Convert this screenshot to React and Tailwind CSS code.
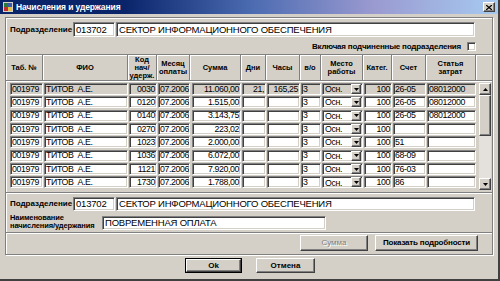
import React from "react";

const FONT = "font-['Liberation_Sans',Arial,sans-serif]";
const SUNKEN =
  "border border-t-[#808080] border-l-[#808080] border-b-white border-r-white shadow-[inset_1px_1px_0_#404040,inset_-1px_-1px_0_#d4d0c8]";
const RAISED =
  "border border-t-white border-l-white border-b-[#404040] border-r-[#404040] shadow-[inset_-1px_-1px_0_#808080,inset_1px_1px_0_#d4d0c8]";

const cols = [
  { w: "w-[33px]", ml: "ml-0", align: "justify-start" },
  { w: "w-[84px]", ml: "ml-[1px]", align: "justify-start" },
  { w: "w-[28px]", ml: "ml-[1px]", align: "justify-end" },
  { w: "w-[32px]", ml: "ml-[1px]", align: "justify-start" },
  { w: "w-[49px]", ml: "ml-[2px]", align: "justify-end" },
  { w: "w-[24px]", ml: "ml-[1px]", align: "justify-end" },
  { w: "w-[33px]", ml: "ml-[1px]", align: "justify-end" },
  { w: "w-[20px]", ml: "ml-[1px]", align: "justify-start" },
  { w: "w-[41px]", ml: "ml-[1px]", align: "justify-start", combo: true },
  { w: "w-[28px]", ml: "ml-[1px]", align: "justify-end" },
  { w: "w-[33px]", ml: "ml-[1px]", align: "justify-start" },
  { w: "w-[49px]", ml: "ml-[1px]", align: "justify-start" },
];

const headers = [
  { w: "w-[37px]", lines: ["Таб. №"] },
  { w: "w-[85px]", lines: ["ФИО"] },
  { w: "w-[29px]", lines: ["Код", "нач/", "удерж."] },
  { w: "w-[33px]", lines: ["Месяц", "оплаты"] },
  { w: "w-[51px]", lines: ["Сумма"] },
  { w: "w-[25px]", lines: ["Дни"] },
  { w: "w-[34px]", lines: ["Часы"] },
  { w: "w-[21px]", lines: ["в/о"] },
  { w: "w-[42px]", lines: ["Место", "работы"] },
  { w: "w-[29px]", lines: ["Катег."] },
  { w: "w-[34px]", lines: ["Счет"] },
  { w: "w-[50px]", lines: ["Статья", "затрат"] },
];

const data = [
  ["0030", "11.060,00", "21,", "165,25", "26-05", "08012000"],
  ["0120", "1.515,00", "", "", "26-05", "08012000"],
  ["0140", "3.143,75", "", "", "26-05", "08012000"],
  ["0270", "223,02", "", "", "", ""],
  ["1023", "2.000,00", "", "", "51", ""],
  ["1036", "6.072,00", "", "", "68-09", ""],
  ["1121", "7.920,00", "", "", "76-03", ""],
  ["1730", "1.788,00", "", "", "86", ""],
];

function Arrow({ up }) {
  return (
    <svg width="5" height="3" viewBox="0 0 5 3">
      {up ? <path d="M2.5 0 L5 3 L0 3 Z" fill="#000" /> : <path d="M0 0 L5 0 L2.5 3 Z" fill="#000" />}
    </svg>
  );
}

function Row({ r, first }) {
  const values = ["001979", "ТИТОВ  А.Е.", r[0], "07.2006", r[1], r[2], r[3], "3", "Осн.", "100", r[4], r[5]];
  const bg = first ? "bg-[#d4d0c8]" : "bg-white";
  return (
    <div className="flex h-[12px]">
      {cols.map((c, i) => (
        <div
          key={i}
          className={`${c.w} ${c.ml} ${SUNKEN} ${bg} h-[12px] flex items-center ${c.align} overflow-hidden text-[8.8px] leading-none pl-[1px] pr-[1px] whitespace-pre tracking-[-0.4px]`}
        >
          {c.combo ? (
            <div className="flex w-full h-full items-center">
              <span className="flex-1 pl-[1px] pt-[1px]">Осн.</span>
              <span className={`w-[10px] h-full ${RAISED} bg-[#d4d0c8] flex items-center justify-center`}>
                <Arrow />
              </span>
            </div>
          ) : (
            values[i]
          )}
        </div>
      ))}
    </div>
  );
}

function Field({ w, h = "h-[15px]", children }) {
  return (
    <div className={`${w} ${h} ${SUNKEN} bg-white flex items-center pl-[2px] text-[9.5px] leading-none whitespace-nowrap overflow-hidden tracking-[-0.2px]`}>
      {children}
    </div>
  );
}

export default function App() {
  return (
    <div className={`w-[500px] h-[281px] bg-[#d4d0c8] ${FONT} text-black flex flex-col overflow-hidden border-r-2 border-b-2 border-r-[#404040] border-b-[#404040]`}>
      {/* title bar */}
      <div className="h-[14px] flex items-center bg-[linear-gradient(90deg,#0a246a_0%,#0a246a_25%,#4a6ab0_50%,#9a9ad0_75%,#a6caf0_100%)] pl-[3px] pr-[3px]">
        <svg width="10" height="10" viewBox="0 0 10 10" className="shrink-0">
          <rect x="0" y="0" width="10" height="10" fill="#d4d0c8" />
          <rect x="1" y="1" width="4" height="4" fill="#2a7a3a" />
          <rect x="5" y="1" width="4" height="4" fill="#3a5ab0" />
          <rect x="1" y="5" width="4" height="4" fill="#c03030" />
          <rect x="5" y="5" width="4" height="4" fill="#e0c040" />
        </svg>
        <span className="ml-[3px] text-white text-[8.5px] font-bold leading-none tracking-[-0.1px]">Начисления и удержания</span>
        <div className="flex-1" />
        <div className={`w-[12px] h-[10px] ${RAISED} bg-[#d4d0c8] flex items-center justify-center`}>
          <svg width="6" height="5" viewBox="0 0 6 5">
            <path d="M0 0 L6 5 M6 0 L0 5" stroke="#000" strokeWidth="1.3" />
          </svg>
        </div>
      </div>

      {/* main panel */}
      <div className="mx-[5px] mt-[3px] h-[238px] border border-[#808080] shadow-[inset_1px_1px_0_white,1px_1px_0_white] flex flex-col">
        <div className="flex items-center pt-[4px] pl-[4px]">
          <span className="w-[63px] text-[8px] font-bold whitespace-nowrap">Подразделение</span>
          <Field w="w-[42px]">013702</Field>
          <div className="w-[1px]" />
          <Field w="w-[359px]">СЕКТОР ИНФОРМАЦИОННОГО ОБЕСПЕЧЕНИЯ</Field>
        </div>
        <div className="flex items-center justify-end mt-[5px] pr-[16px] h-[9px]">
          <span className="text-[8px] font-bold leading-none tracking-[-0.2px]">Включая подчиненные подразделения</span>
          <div className={`ml-[6px] w-[9px] h-[9px] ${SUNKEN} bg-white`} />
        </div>

        {/* header */}
        <div className="mt-[3px] h-[27px] flex border-t border-t-[#808080] border-b border-b-[#808080] shadow-[inset_0_1px_0_white,0_1px_0_white]">
          {headers.map((h, i) => (
            <div
              key={i}
              className={`${h.w} h-full flex flex-col items-center justify-center border-r border-r-[#808080] shadow-[1px_0_0_white] text-[7.5px] font-bold leading-[8px] text-center whitespace-nowrap`}
            >
              {h.lines.map((l, j) => (
                <span key={j}>{l}</span>
              ))}
            </div>
          ))}
        </div>

        {/* rows + scrollbar */}
        <div className="flex mt-[2px] pl-[4px] h-[107px]">
          <div className="flex flex-col gap-[1.35px]">
            {data.map((r, i) => (
              <Row key={i} r={r} first={i === 0} />
            ))}
          </div>
          <div className="ml-[3px] w-[12px] h-full flex flex-col">
            <div className={`h-[12px] ${RAISED} bg-[#d4d0c8] flex items-center justify-center`}>
              <Arrow up />
            </div>
            <div className={`h-[41px] ${RAISED} bg-[#d4d0c8]`} />
            <div className="flex-1 bg-[#e4e1dc]" />
            <div className={`h-[12px] ${RAISED} bg-[#d4d0c8] flex items-center justify-center`}>
              <Arrow />
            </div>
          </div>
        </div>

        <div className="mt-[2px] border-t border-t-[#808080] border-b border-b-white" />

        {/* bottom form */}
        <div className="flex items-center mt-[3px] pl-[4px]">
          <span className="w-[63px] text-[8px] font-bold whitespace-nowrap">Подразделение</span>
          <Field w="w-[42px]" h="h-[14px]">013702</Field>
          <div className="w-[1px]" />
          <Field w="w-[359px]" h="h-[14px]">СЕКТОР ИНФОРМАЦИОННОГО ОБЕСПЕЧЕНИЯ</Field>
        </div>
        <div className="flex items-center mt-[1px] pl-[4px] h-[19px]">
          <span className="w-[92px] text-[7.5px] font-bold leading-[8px] whitespace-nowrap tracking-[-0.1px]">
            Наименование
            <br />
            начисления/удержания
          </span>
          <div className="mt-[2px]">
            <Field w="w-[224px]" h="h-[14px]">ПОВРЕМЕННАЯ ОПЛАТА</Field>
          </div>
        </div>

        <div className="mt-[1px] border-t border-t-[#808080] border-b border-b-white" />

        <div className="flex justify-end mt-[1px] pr-[14px] gap-[7px]">
          <div className={`w-[68px] h-[16px] ${RAISED} bg-[#d4d0c8] flex items-center justify-center text-[8px] text-[#808080] [text-shadow:1px_1px_0_white]`}>
            Сумма
          </div>
          <div className={`w-[103px] h-[16px] ${RAISED} bg-[#d4d0c8] flex items-center justify-center text-[8px] font-bold whitespace-nowrap tracking-[-0.2px]`}>
            Показать подробности
          </div>
        </div>
      </div>

      {/* Ok / Cancel */}
      <div className="flex mt-[3px] pl-[185px] gap-[14px]">
        <div className="w-[57px] h-[15px] border border-black">
          <div className={`w-full h-full ${RAISED} bg-[#d4d0c8] flex items-center justify-center text-[8px] font-bold`}>Ok</div>
        </div>
        <div className={`w-[59px] h-[15px] ${RAISED} bg-[#d4d0c8] flex items-center justify-center text-[8px] font-bold`}>
          Отмена
        </div>
      </div>
    </div>
  );
}
